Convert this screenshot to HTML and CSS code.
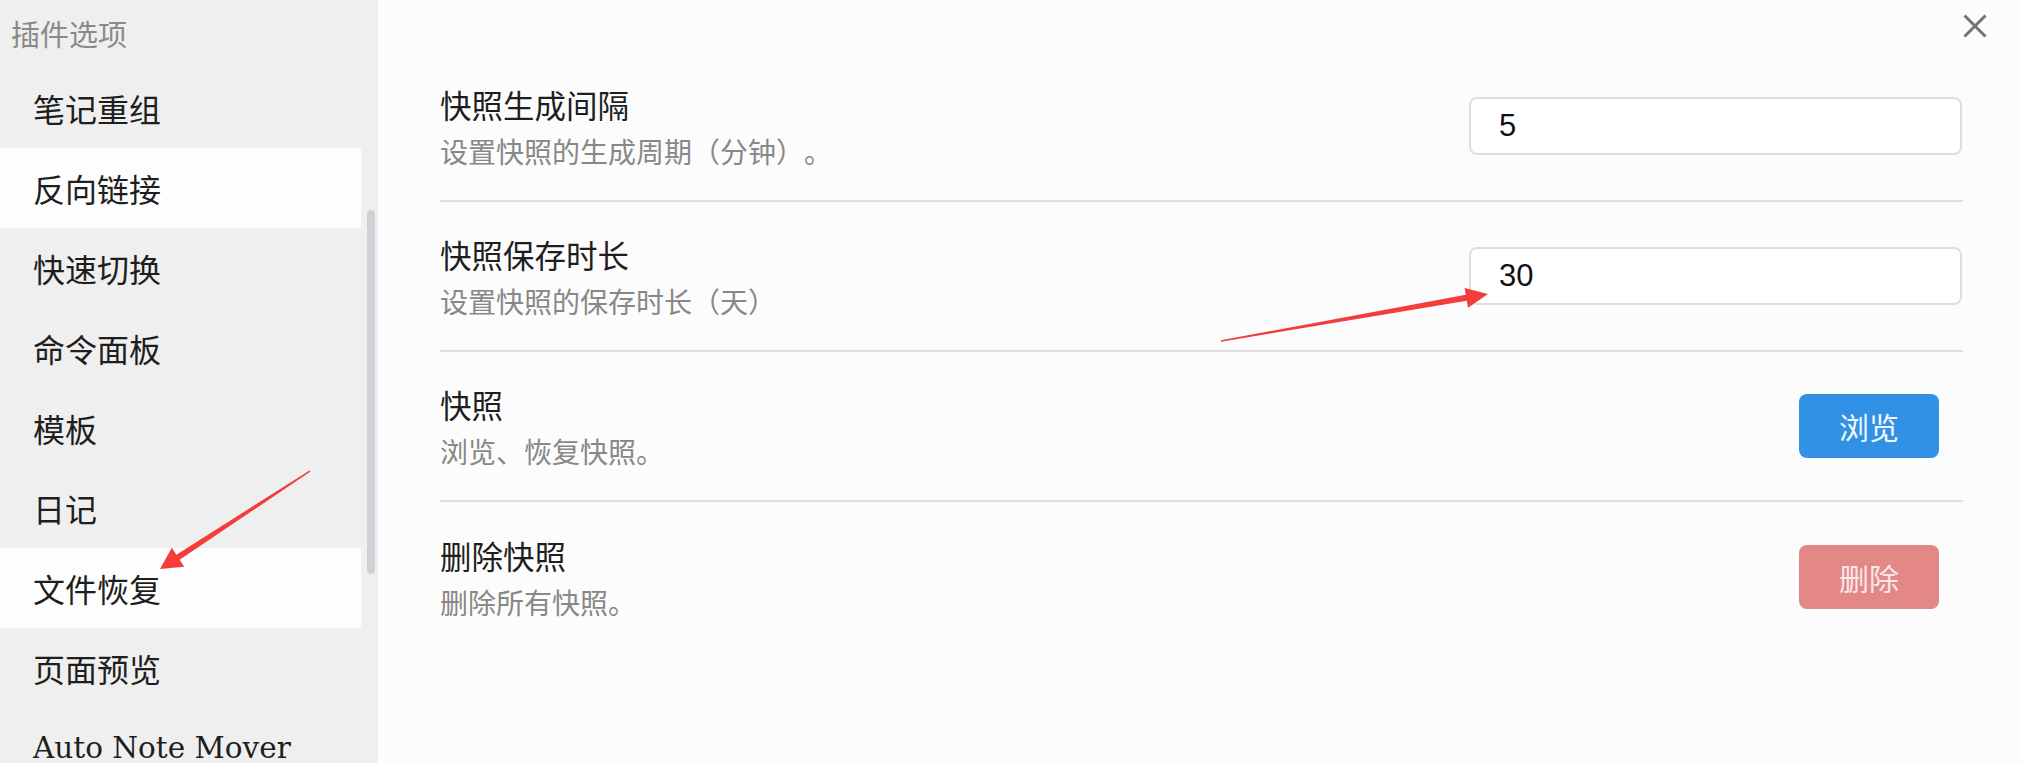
FILE: index.html
```html
<!DOCTYPE html>
<html lang="zh">
<head>
<meta charset="utf-8">
<title>插件选项</title>
<link rel="stylesheet" href="styles.css">
</head>
<body>
<div class="app">
  <aside class="sidebar">
    <div class="side-list">
      <div class="side-header">插件选项</div>
      <div class="side-item">笔记重组</div>
      <div class="side-item active">反向链接</div>
      <div class="side-item">快速切换</div>
      <div class="side-item">命令面板</div>
      <div class="side-item">模板</div>
      <div class="side-item">日记</div>
      <div class="side-item active">文件恢复</div>
      <div class="side-item">页面预览</div>
      <div class="side-item latin">Auto Note Mover</div>
    </div>
    <div class="side-scroll"><div class="thumb"></div></div>
  </aside>
  <main class="main">
    <div class="close">
      <svg width="24" height="24" viewBox="0 0 24 24"><path d="M1.5 1.5 L22.5 22.5 M22.5 1.5 L1.5 22.5" stroke="#737373" stroke-width="3" fill="none"/></svg>
    </div>
    <div class="setting">
      <div class="info">
        <div class="title">快照生成间隔</div>
        <div class="desc">设置快照的生成周期（分钟）。</div>
      </div>
      <div class="control"><div class="input">5</div></div>
    </div>
    <div class="setting">
      <div class="info">
        <div class="title">快照保存时长</div>
        <div class="desc">设置快照的保存时长（天）</div>
      </div>
      <div class="control"><div class="input">30</div></div>
    </div>
    <div class="setting">
      <div class="info">
        <div class="title">快照</div>
        <div class="desc">浏览、恢复快照。</div>
      </div>
      <div class="control"><div class="btn btn-blue">浏览</div></div>
    </div>
    <div class="setting last">
      <div class="info">
        <div class="title">删除快照</div>
        <div class="desc">删除所有快照。</div>
      </div>
      <div class="control"><div class="btn btn-red">删除</div></div>
    </div>
  </main>
</div>
<svg class="overlay" width="2022" height="763" viewBox="0 0 2022 763">
  <polygon fill="#f43c3c" points="1221.1,341.7 1466.8,300.8 1468.0,307.7 1488,294 1464.6,288.0 1465.8,294.8 1220.9,340.3"/>
  <polygon fill="#f43c3c" points="310.5,471.6 179.6,559.7 184.2,566.7 160,569 171.8,547.7 176.4,554.7 309.5,470.4"/>
</svg>
</body>
</html>
```
FILE: styles.css
```css
html, body {
  margin: 0;
  padding: 0;
  width: 2022px;
  height: 763px;
  overflow: hidden;
  background: #fcfcfc;
  font-family: "Noto Sans CJK SC", "Noto Sans", sans-serif;
  text-spacing-trim: space-all;
}
.app {
  display: flex;
  width: 2022px;
  height: 763px;
  position: relative;
}
.sidebar {
  width: 378px;
  flex: none;
  background: #efefef;
  display: flex;
  height: 763px;
  overflow: hidden;
}
.side-list {
  width: 361px;
  flex: none;
}
.side-header {
  height: 68px;
  display: flex;
  align-items: center;
  padding-left: 11px;
  font-size: 29px;
  color: #8a8a8a;
  box-sizing: border-box;
  padding-bottom: 2px;
}
.side-item {
  height: 80px;
  display: flex;
  align-items: center;
  padding-left: 33px;
  font-size: 32px;
  color: #1e1e1e;
}
.side-item.active {
  background: #fdfdfd;
}
.side-item.latin {
  font-family: "DejaVu Serif", serif;
  font-size: 29.5px;
  color: #1e1e1e;
}
.side-scroll {
  flex: 1;
  padding-top: 210px;
  padding-left: 6px;
}
.thumb {
  width: 8px;
  height: 364px;
  border-radius: 4px;
  background: #cfd1d7;
}
.main {
  flex: 1;
  position: relative;
  padding: 52px 59px 0 62px;
  background: #fcfcfc;
}
.close {
  position: absolute;
  top: 14px;
  left: 1585px;
  width: 24px;
  height: 24px;
}
.close svg { display: block; }
.setting {
  display: flex;
  align-items: center;
  justify-content: space-between;
  height: 150px;
  box-sizing: border-box;
  border-bottom: 2px solid #e0e0e0;
}
.setting.last {
  border-bottom: none;
}
.info {
  display: flex;
  flex-direction: column;
  padding-bottom: 0;
}
.title {
  font-size: 31.5px;
  line-height: 40px;
  color: #1e1e1e;
}
.desc {
  margin-top: 9px;
  font-size: 28px;
  line-height: 36px;
  color: #888888;
}
.control {
  display: flex;
  align-items: center;
}
.input {
  width: 493px;
  height: 58px;
  box-sizing: border-box;
  border: 2px solid #dedede;
  border-radius: 8px;
  background: #ffffff;
  padding-left: 28px;
  display: flex;
  align-items: center;
  font-family: "Liberation Sans", Arial, sans-serif;
  font-size: 31px;
  color: #111;
  margin-right: 1px;
}
.btn {
  width: 140px;
  height: 64px;
  border-radius: 8px;
  display: flex;
  align-items: center;
  justify-content: center;
  font-size: 30px;
  margin-right: 24px;
}
.btn-blue {
  background: #3191e4;
  color: #f3f7fc;
}
.btn-red {
  background: #e48887;
  color: #f7e8e8;
}
.overlay {
  position: absolute;
  top: 0;
  left: 0;
  pointer-events: none;
}
```
